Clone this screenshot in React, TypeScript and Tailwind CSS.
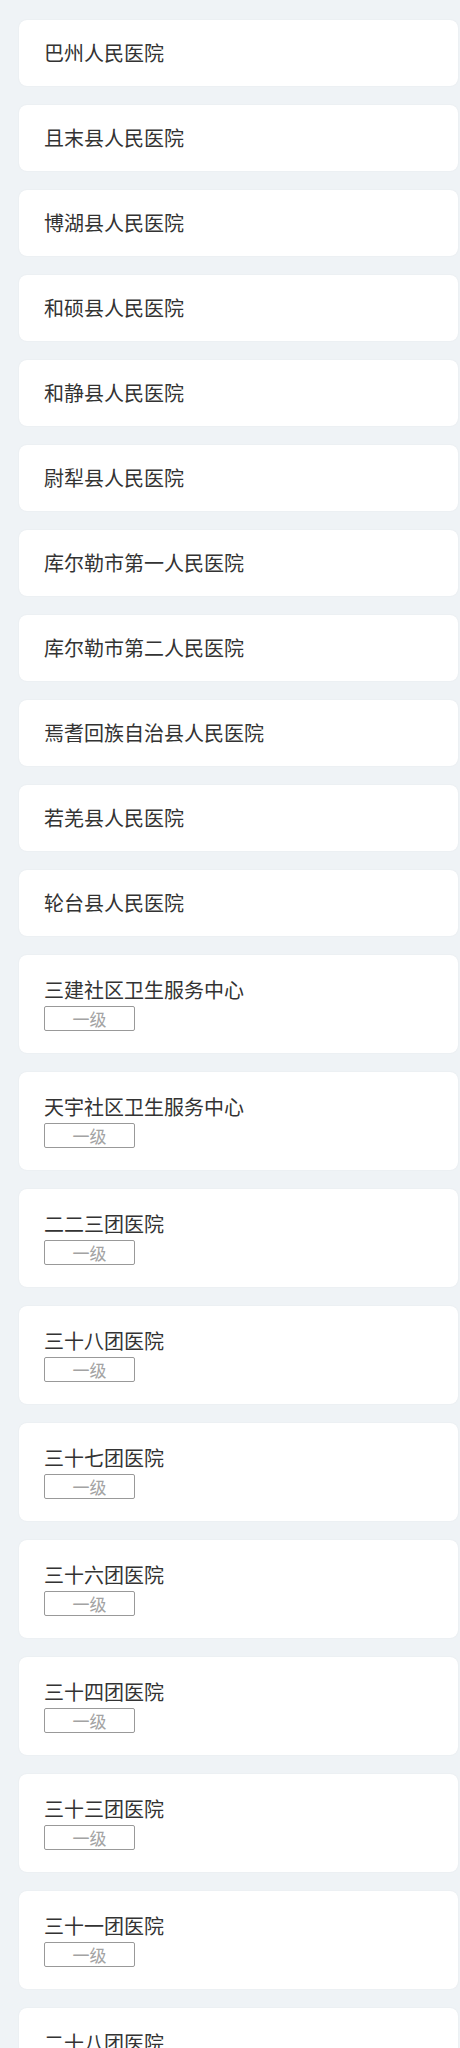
const hospitals: { name: string; level?: string }[] = [
  { name: "巴州人民医院" },
  { name: "且末县人民医院" },
  { name: "博湖县人民医院" },
  { name: "和硕县人民医院" },
  { name: "和静县人民医院" },
  { name: "尉犁县人民医院" },
  { name: "库尔勒市第一人民医院" },
  { name: "库尔勒市第二人民医院" },
  { name: "焉耆回族自治县人民医院" },
  { name: "若羌县人民医院" },
  { name: "轮台县人民医院" },
  { name: "三建社区卫生服务中心", level: "一级" },
  { name: "天宇社区卫生服务中心", level: "一级" },
  { name: "二二三团医院", level: "一级" },
  { name: "三十八团医院", level: "一级" },
  { name: "三十七团医院", level: "一级" },
  { name: "三十六团医院", level: "一级" },
  { name: "三十四团医院", level: "一级" },
  { name: "三十三团医院", level: "一级" },
  { name: "三十一团医院", level: "一级" },
  { name: "二十八团医院", level: "一级" },
];

function HospitalCard({ name, level }: { name: string; level?: string }) {
  return (
    <div
      className={
        "flex flex-col justify-center rounded-[8px] bg-white pl-[25px] shadow-[0_0_2px_rgba(0,0,0,0.06)] " +
        (level ? "h-[98px]" : "h-[66px]")
      }
    >
      <div className="text-[20px] leading-[26px] text-[#333333]">{name}</div>
      {level && (
        <div className="mt-[3px] flex h-[25px] w-[91px] items-center justify-center rounded-[2px] border border-[#999999] text-[17px] leading-none text-[#a3a3a3]">
          {level}
        </div>
      )}
    </div>
  );
}

export default function App() {
  return (
    <div
      className="min-h-[2048px] bg-[#eff3f6] pt-[20px] pl-[19px] pr-[2px]"
      style={{ fontFamily: '"Noto Sans CJK SC", "Noto Sans", sans-serif' }}
    >
      <div className="flex flex-col gap-[19px]">
        {hospitals.map((h) => (
          <HospitalCard key={h.name} name={h.name} level={h.level} />
        ))}
      </div>
    </div>
  );
}
